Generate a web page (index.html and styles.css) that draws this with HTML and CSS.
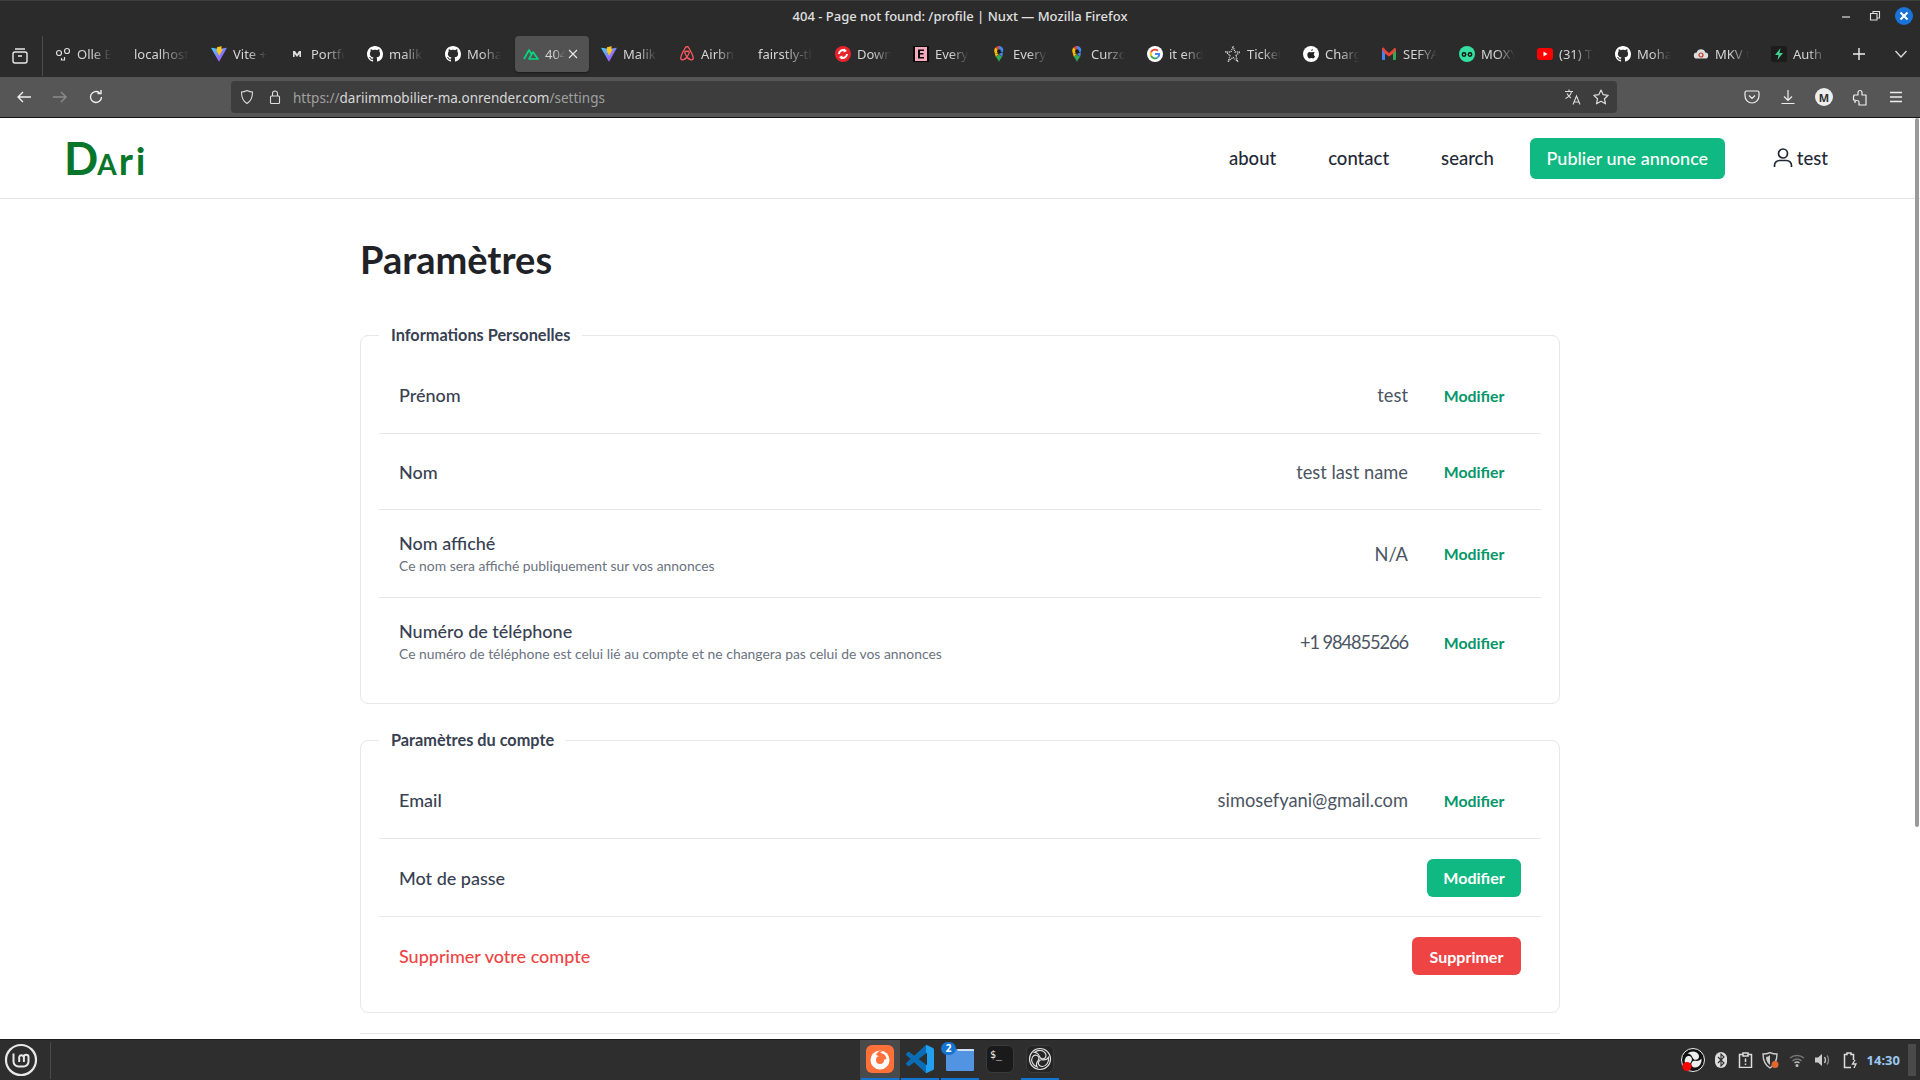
FILE: index.html
```html
<!DOCTYPE html>
<html lang="fr">
<head>
<meta charset="utf-8">
<title>Paramètres</title>
<link rel="stylesheet" href="styles.css">
</head>
<body>
<svg class="defs" width="0" height="0" aria-hidden="true">
  <defs>
    <symbol id="gh" viewBox="0 0 16 16"><path fill="#fff" d="M8 0C3.58 0 0 3.58 0 8c0 3.54 2.29 6.53 5.47 7.59.4.07.55-.17.55-.38 0-.19-.01-.82-.01-1.49-2.01.37-2.53-.49-2.69-.94-.09-.23-.48-.94-.82-1.13-.28-.15-.68-.52-.01-.53.63-.01 1.08.58 1.23.82.72 1.21 1.87.87 2.33.66.07-.52.28-.87.51-1.07-1.78-.2-3.64-.89-3.64-3.95 0-.87.31-1.59.82-2.15-.08-.2-.36-1.02.08-2.12 0 0 .67-.21 2.2.82.64-.18 1.32-.27 2-.27s1.36.09 2 .27c1.53-1.04 2.2-.82 2.2-.82.44 1.1.16 1.92.08 2.12.51.56.82 1.27.82 2.15 0 3.07-1.87 3.75-3.65 3.95.29.25.54.73.54 1.48 0 1.07-.01 1.93-.01 2.2 0 .21.15.46.55.38A8.01 8.01 0 0 0 16 8c0-4.42-3.58-8-8-8z"/></symbol>
    <linearGradient id="vg1" x1="0" y1="0" x2="1" y2="1"><stop offset="0" stop-color="#41d1ff"/><stop offset="1" stop-color="#bd34fe"/></linearGradient>
    <linearGradient id="vsc" x1="0" y1="0" x2="1" y2="0"><stop offset=".72" stop-color="#0a6db5"/><stop offset=".72" stop-color="#22a0f0"/></linearGradient>
    <symbol id="vite" viewBox="0 0 16 16"><path fill="url(#vg1)" d="M15.7 2.3 8.4 15.3c-.2.3-.6.3-.8 0L.3 2.3c-.2-.3.1-.7.4-.6L8 3l7.3-1.3c.3-.1.6.3.4.6z"/><path fill="#ffc517" d="M11.4.1 6 1.2l-.3 5 1.6.4-.4 2 1.4-.4-.3 2 .9-1.6 3-5.8-1.7.4.5-3z"/></symbol>
    <symbol id="pin" viewBox="0 0 16 16"><path fill="#34a853" d="M8 16c-1-2.5-2-3.5-3.2-5.2l3.2-2 3.2 2C10 12.500 9 13.500 8 16z"/><path fill="#4285f4" d="M11 1.300C10.200.5 9.100 0 8 0v5l3.600 1.200C12.600 4.500 12.500 2.500 11 1.300z"/><path fill="#ea4335" d="M8 0C6.600 0 5.400.6 4.500 1.600L8 5z"/><path fill="#fbbc04" d="M4.500 1.600C3.200 3 3 4.800 3.500 6.500L6 8l2-3z"/><path fill="#fbbc04" d="M3.500 6.500c.3 1.500.9 2.700 1.300 4.300L8 8 6 8z"/><path fill="#4285f4" d="M11.600 6.200 8 8l3.200 2.800c.4-1.500.9-3 .4-4.600z"/><circle cx="8" cy="5.200" r="1.900" fill="#1a1a1a"/></symbol>
    <symbol id="blade" viewBox="0 0 24 24"><path d="M6.500 5.500C10 2.500 15.500 2.800 17.500 6.500c1.300 2.500 0 5-2.500 5.300-1.800.2-3-1-3.500-2.300C10.500 7 8.500 5.500 6.500 5.500z"/></symbol>
  </defs>
</svg>

<div class="window">
  <header class="titlebar">
    <span></span>
    <span class="window-title">404 - Page not found: /profile | Nuxt — Mozilla Firefox</span>
    <div class="window-controls">
      <svg width="14" height="14" viewBox="0 0 14 14"><path d="M2 8h8" stroke="#ddd" stroke-width="1.200"/></svg>
      <svg width="14" height="14" viewBox="0 0 14 14"><path d="M2.500 4.500h6.500v6.500H2.500zM5 4.500V2.500h6.500V9H9" fill="none" stroke="#ddd" stroke-width="1.100"/></svg>
      <span class="close-dot"><svg width="10" height="10" viewBox="0 0 10 10"><path d="M1.500 1.500l7 7M8.500 1.500l-7 7" stroke="#fff" stroke-width="2"/></svg></span>
    </div>
  </header>

  <div class="tabstrip">
    <div class="tablist-btn">
      <svg width="18" height="18" viewBox="0 0 18 18" fill="none" stroke="#e8e8e8" stroke-width="1.400"><rect x="2" y="5" width="14" height="11" rx="2"/><path d="M4 2h10M7 9h4"/></svg>
    </div>
    <div class="tabs">
      <div class="tab"><svg class="ico" viewBox="0 0 16 16" fill="none" stroke="#ddd" stroke-width="1.200"><circle cx="4" cy="7" r="2.500"/><circle cx="12" cy="5" r="2.500"/><path d="M6.500 12v2h3v-3"/></svg><span class="tab-text">Olle Bergman</span></div>
      <div class="tab no-icon"><span class="tab-text">localhost:3000</span></div>
      <div class="tab"><svg class="ico"><use href="#vite"/></svg><span class="tab-text">Vite + Vue</span></div>
      <div class="tab"><svg class="ico" viewBox="0 0 16 16"><path fill="#ddd" d="M4 5h2l2 3 2-3h2v6h-1.600V8L8 11 5.600 8v3H4z"/></svg><span class="tab-text">Portfolio</span></div>
      <div class="tab"><svg class="ico"><use href="#gh"/></svg><span class="tab-text">malika</span></div>
      <div class="tab"><svg class="ico"><use href="#gh"/></svg><span class="tab-text">Mohamed</span></div>
      <div class="tab active"><svg class="ico" viewBox="0 0 16 16" fill="none" stroke="#00dc82" stroke-width="1.600" stroke-linejoin="round"><path d="M1 13 6 4l2.500 4.500M6 13l4-7 5 7z"/></svg><span class="tab-text">404 - Page</span><svg class="tab-close" width="10" height="10" viewBox="0 0 10 10"><path d="M1 1l8 8M9 1 1 9" stroke="#e8e8e8" stroke-width="1.100"/></svg></div>
      <div class="tab"><svg class="ico"><use href="#vite"/></svg><span class="tab-text">Malika</span></div>
      <div class="tab"><svg class="ico" viewBox="0 0 16 16" fill="none" stroke="#ff5a5f" stroke-width="1.300"><path d="M8 11C6 8 5.500 7 5.800 6c.4-1 3.900-1 4.400 0 .3 1-.2 2-2.200 5 2 2.800 5.500 4 6.200 1.500.5-1.800-3.500-9-4.700-11-.9-1.200-2.100-1.200-3 0C5.300 3.500 1.300 10.700 1.800 12.500 2.500 15 6 13.800 8 11z"/></svg><span class="tab-text">Airbnb</span></div>
      <div class="tab no-icon"><span class="tab-text">fairstly-the</span></div>
      <div class="tab"><svg class="ico" viewBox="0 0 16 16"><circle cx="8" cy="8" r="8" fill="#e8232c"/><path d="M4 8a4 4 0 0 1 6-3.400M12 8a4 4 0 0 1-6 3.400" stroke="#fff" stroke-width="2" fill="none"/><path d="M9 2.500 12 5 8.500 6.500zM7 13.500 4 11l3.500-1.500z" fill="#fff"/></svg><span class="tab-text">Download</span></div>
      <div class="tab"><svg class="ico" viewBox="0 0 16 16"><rect width="16" height="16" fill="#0a0a0a"/><path fill="#f5a9bc" d="M2 1h12v14H2z"/><path fill="#0a0a0a" d="M5 3.500h6V5H7v2h3.500v1.500H7V11h4v1.500H5z"/></svg><span class="tab-text">Everyone</span></div>
      <div class="tab"><svg class="ico"><use href="#pin"/></svg><span class="tab-text">Everyone</span></div>
      <div class="tab"><svg class="ico"><use href="#pin"/></svg><span class="tab-text">Curzon</span></div>
      <div class="tab"><svg class="ico" viewBox="0 0 16 16"><circle cx="8" cy="8" r="8" fill="#fff"/><path d="M8 4.500a3.500 3.500 0 0 1 2.300.9l1.300-1.300A5.300 5.300 0 0 0 3.300 5.600l1.500 1.200A3.500 3.500 0 0 1 8 4.500z" fill="#ea4335"/><path d="M3.300 5.600a5.300 5.300 0 0 0 0 4.800l1.500-1.200a3.500 3.500 0 0 1 0-2.400z" fill="#fbbc04"/><path d="M3.300 10.400a5.300 5.300 0 0 0 8 1.700l-1.400-1.100a3.500 3.500 0 0 1-5.100-1.800z" fill="#34a853"/><path d="M13.200 7H8v2h3.100a2.700 2.700 0 0 1-1.200 2l1.400 1.100A5.300 5.300 0 0 0 13.200 7z" fill="#4285f4"/></svg><span class="tab-text">it ends</span></div>
      <div class="tab"><svg class="ico" viewBox="0 0 16 16"><path fill="none" stroke="#ddd" stroke-width="1.300" stroke-dasharray="1 .9" d="M8 .5 10 6h5l-4 3.500L12.500 15 8 11.500 3.500 15 5 9.500 1 6h5z"/></svg><span class="tab-text">Ticket</span></div>
      <div class="tab"><svg class="ico" viewBox="0 0 16 16"><circle cx="8" cy="8" r="8" fill="#fff"/><path d="M10.300 5.900c-.7-.1-1.300.4-1.900.4-.5 0-1.100-.4-1.700-.4-1.400 0-2.400 1.200-2.400 2.800 0 1.900 1.200 3.800 2.300 3.800.6 0 .9-.4 1.700-.4s1 .4 1.700.4c1 0 1.700-1.300 2-2.300-1.600-.7-1.700-2.900-.1-3.700-.4-.4-1-.6-1.600-.6zM9.900 3c-.9.100-1.700.9-1.600 2 .9 0 1.700-1 1.600-2z" fill="#222"/></svg><span class="tab-text">Charger</span></div>
      <div class="tab"><svg class="ico" viewBox="0 0 16 16"><path fill="#4285f4" d="M1 3.500h3V14H2a1 1 0 0 1-1-1z"/><path fill="#34a853" d="M12 3.500h3V13a1 1 0 0 1-1 1h-2z"/><path fill="#ea4335" d="M4 3.500 8 7l4-3.500 1-1.200c.8-.6 2-.1 2 1.200v.5L12 7.800 8 10.500 4 7.800 1 3.500V3c0-1.300 1.300-1.800 2-1.200z"/></svg><span class="tab-text">SEFYANI</span></div>
      <div class="tab"><svg class="ico" viewBox="0 0 16 16"><circle cx="8" cy="8" r="8" fill="#34e0a1"/><circle cx="5" cy="8.500" r="2.400" fill="#111"/><circle cx="11" cy="8.500" r="2.400" fill="#111"/><circle cx="5" cy="8.500" r="1" fill="#34e0a1"/><circle cx="11" cy="8.500" r="1" fill="#34e0a1"/></svg><span class="tab-text">MOXY</span></div>
      <div class="tab"><svg class="ico" viewBox="0 0 16 16"><rect y="2" width="16" height="12" rx="3" fill="#f00"/><path d="M6.500 5.500v5l4-2.500z" fill="#fff"/></svg><span class="tab-text">(31) Top</span></div>
      <div class="tab"><svg class="ico"><use href="#gh"/></svg><span class="tab-text">Mohamed</span></div>
      <div class="tab"><svg class="ico" viewBox="0 0 16 16"><path d="M4 12.500a3 3 0 0 1-.3-6 4.500 4.500 0 0 1 8.600 0 3 3 0 0 1-.3 6z" fill="#ddd"/><circle cx="8" cy="9" r="2" fill="none" stroke="#c0392b" stroke-width="1.200"/></svg><span class="tab-text">MKV to</span></div>
      <div class="tab"><svg class="ico" viewBox="0 0 16 16"><rect width="16" height="16" rx="2" fill="#1c1c1c"/><path d="M9.500 2 4 9h3.500l-1 5L12 7H8.500z" fill="#3ecf8e"/></svg><span class="tab-text">Auth | Supabase</span></div>
    </div>
    <div class="strip-actions">
      <svg width="14" height="14" viewBox="0 0 14 14"><path d="M7 1v12M1 7h12" stroke="#eee" stroke-width="1.400"/></svg>
      <svg width="14" height="14" viewBox="0 0 14 14" fill="none"><path d="M1.500 4 7 10l5.500-6" stroke="#ddd" stroke-width="1.300"/></svg>
    </div>
  </div>

  <nav class="urlbar">
    <div class="tool-group">
      <span class="tool"><svg width="16" height="16" viewBox="0 0 16 16" fill="none" stroke="#eee" stroke-width="1.400"><path d="M15 8H2M7 3 2 8l5 5"/></svg></span>
      <span class="tool"><svg width="16" height="16" viewBox="0 0 16 16" fill="none" stroke="#8c8c8c" stroke-width="1.400"><path d="M1 8h13M9 3l5 5-5 5"/></svg></span>
      <span class="tool"><svg width="16" height="16" viewBox="0 0 16 16" fill="none" stroke="#eee" stroke-width="1.400"><path d="M13.500 8a5.500 5.500 0 1 1-2-4.300M13 1v3.500H9.500"/></svg></span>
    </div>
    <div class="address">
      <svg class="addr-icon" width="16" height="16" viewBox="0 0 16 16" fill="none" stroke="#ddd" stroke-width="1.100"><path d="M8 1.500c2 1 3.500 1.500 5.500 1.500 0 5-1 9-5.500 11.500C3.500 12 2.500 8 2.500 3 4.500 3 6 2.500 8 1.500z"/></svg>
      <svg class="addr-icon" width="16" height="16" viewBox="0 0 16 16" fill="none" stroke="#ddd" stroke-width="1.100"><rect x="3.500" y="7" width="9" height="7.500" rx="1"/><path d="M5.500 7V4.500a2.500 2.500 0 0 1 5 0V7"/></svg>
      <span class="url"><span class="url-dim">https://</span>dariimmobilier-ma.onrender.com<span class="url-dim">/settings</span></span>
      <svg class="addr-end" width="18" height="18" viewBox="0 0 18 18" fill="none" stroke="#ddd" stroke-width="1.100"><path d="M1 3.500h8M5 1.500v2M7.500 3.500C7 6.500 4.500 9 1.500 10.500M3 5.500c1 2 2.500 3.500 4 4.500"/><path d="M9 16.500 12.500 8l3.500 8.500M10.200 14h4.600"/></svg>
      <svg class="addr-end" width="18" height="18" viewBox="0 0 18 18" fill="none" stroke="#ddd" stroke-width="1.200"><path d="M9 2l2.200 4.700 5 .6-3.700 3.500 1 5L9 13.300 4.500 15.800l1-5L1.800 7.300l5-.6z" stroke-linejoin="round"/></svg>
    </div>
    <div class="tool-group">
      <span class="tool"><svg width="16" height="16" viewBox="0 0 16 16" fill="none" stroke="#eee" stroke-width="1.200"><path d="M2.500 2h11A1.500 1.500 0 0 1 15 3.500V7A7 7 0 0 1 1 7V3.500A1.500 1.500 0 0 1 2.500 2zM5 6.500l3 3 3-3"/></svg></span>
      <span class="tool"><svg width="16" height="16" viewBox="0 0 16 16" fill="none" stroke="#eee" stroke-width="1.200"><path d="M8 1v10M4 7.500 8 11.500l4-4M1.500 14.500h13"/></svg></span>
      <span class="tool"><span class="avatar">M</span></span>
      <span class="tool"><svg width="16" height="18" viewBox="0 0 16 18" fill="none" stroke="#eee" stroke-width="1.200"><path d="M2 7h4V4.500a2 2 0 0 1 4 0V7h4v10H7v-2.500a2 2 0 0 0-4 0V12H1.500V9z" stroke-linejoin="round"/></svg></span>
      <span class="tool"><svg width="16" height="16" viewBox="0 0 16 16" stroke="#eee" stroke-width="1.300"><path d="M2 3.500h12M2 8h12M2 12.500h12"/></svg></span>
    </div>
  </nav>

  <div class="page">
    <header class="site-header">
      <a class="logo"><span class="logo-d">D</span><span class="logo-a">A</span><span class="logo-r">ri</span></a>
      <div class="site-nav">
        <a class="nav-link">about</a>
        <a class="nav-link">contact</a>
        <a class="nav-link">search</a>
        <a class="publish">Publier une annonce</a>
        <a class="user"><svg width="20" height="22" viewBox="0 0 20 22" fill="none" stroke="#1f2937" stroke-width="1.700"><circle cx="10" cy="6.500" r="4.500"/><path d="M1.500 20v-1.500a5 5 0 0 1 5-5h7a5 5 0 0 1 5 5V20"/></svg>test</a>
      </div>
    </header>

    <main class="content">
      <h1 class="page-title">Paramètres</h1>

      <fieldset class="panel">
        <legend class="panel-legend">Informations Personelles</legend>
        <div class="row">
          <div class="label">Prénom</div>
          <div class="value">test</div>
          <a class="edit-link">Modifier</a>
        </div>
        <div class="row">
          <div class="label">Nom</div>
          <div class="value">test last name</div>
          <a class="edit-link">Modifier</a>
        </div>
        <div class="row row-tall">
          <div class="label">Nom affiché<small class="hint">Ce nom sera affiché publiquement sur vos annonces</small></div>
          <div class="value">N/A</div>
          <a class="edit-link">Modifier</a>
        </div>
        <div class="row row-tall">
          <div class="label">Numéro de téléphone<small class="hint">Ce numéro de téléphone est celui lié au compte et ne changera pas celui de vos annonces</small></div>
          <div class="value value-phone">+1 984855266</div>
          <a class="edit-link">Modifier</a>
        </div>
      </fieldset>

      <fieldset class="panel panel-account">
        <legend class="panel-legend">Paramètres du compte</legend>
        <div class="row">
          <div class="label">Email</div>
          <div class="value">simosefyani@gmail.com</div>
          <a class="edit-link">Modifier</a>
        </div>
        <div class="row row-action">
          <div class="label">Mot de passe</div>
          <a class="btn btn-green">Modifier</a>
        </div>
        <div class="row row-action">
          <div class="label label-danger">Supprimer votre compte</div>
          <a class="btn btn-red">Supprimer</a>
        </div>
      </fieldset>

      <div class="next-panel"></div>
    </main>
    <div class="scroll-thumb"></div>
  </div>

  <footer class="taskbar">
    <div class="task-left">
      <svg width="34" height="34" viewBox="0 0 34 34" fill="none" stroke="#e8e8e8"><circle cx="17" cy="17" r="15" stroke-width="2.200"/><path d="M9.500 10.500v8a5 5 0 0 0 5 5h5a5 5 0 0 0 5-5v-4.500a2.300 2.300 0 0 0-4.600 0v5M15.200 19v-5a2.300 2.300 0 0 1 4.400 0" stroke-width="2"/></svg>
    </div>
    <div class="task-center">
      <div class="task-app is-active is-open"><span class="fx-tile"><svg width="22" height="22" viewBox="0 0 22 22"><circle cx="11" cy="12" r="9.500" fill="#fff"/><circle cx="11" cy="12" r="4" fill="#ff7139"/><path d="M11 8.500a3.500 3.500 0 0 1 3.500 3.500l3-1C17 7 14 5 11 5 12.500 3.500 14 2.500 15 2.500 11 1.500 8 4 7 7z" fill="#ff7139"/></svg></span></div>
      <div class="task-app is-open"><svg width="28" height="28" viewBox="0 0 24 24"><path fill="url(#vsc)" d="M23.150 2.587 18.210.210a1.494 1.494 0 0 0-1.705.29l-9.460 8.630-4.120-3.128a.999.999 0 0 0-1.276.057L.327 7.261A1 1 0 0 0 .326 8.740L3.899 12 .326 15.260a1 1 0 0 0 .001 1.479L1.650 17.940a.999.999 0 0 0 1.276.057l4.120-3.128 9.460 8.630a1.492 1.492 0 0 0 1.704.29l4.942-2.377A1.500 1.500 0 0 0 24 20.060V3.939a1.500 1.500 0 0 0-.85-1.352zm-5.146 14.861L10.826 12l7.178-5.448v10.896z"/></svg></div>
      <div class="task-app is-open"><svg width="28" height="23" viewBox="0 0 28 23"><path fill="#5294e2" d="M0 2a1 1 0 0 1 1-1h26a1 1 0 0 1 1 1v20a1 1 0 0 1-1 1H1a1 1 0 0 1-1-1z"/><path fill="#e8eef5" d="M11 1h16a1 1 0 0 1 1 1v1H12z" opacity=".85"/></svg><span class="app-badge">2</span></div>
      <div class="task-app"><span class="term-tile">$_</span></div>
      <div class="task-app is-open"><span class="obs-tile"><svg width="24" height="24" viewBox="0 0 24 24" fill="none" stroke="#ddd" stroke-width="1.200"><circle cx="12" cy="12" r="10.500"/><use href="#blade" width="24" height="24"/><use href="#blade" width="24" height="24" transform="rotate(120 12 12)"/><use href="#blade" width="24" height="24" transform="rotate(240 12 12)"/></svg></span></div>
    </div>
    <div class="task-right">
      <span class="tray obs-tray"><svg width="24" height="24" viewBox="0 0 24 24" fill="#eee"><circle cx="12" cy="12" r="11.500" fill="#111" stroke="#eee" stroke-width="1"/><use href="#blade" width="24" height="24"/><use href="#blade" width="24" height="24" transform="rotate(120 12 12)"/><use href="#blade" width="24" height="24" transform="rotate(240 12 12)"/><circle cx="6" cy="18.500" r="4.500" fill="#f00"/></svg></span>
      <span class="tray tray-bt"><svg width="12" height="16" viewBox="0 0 12 16"><rect width="12" height="16" rx="6" fill="#ddd"/><path d="M3 5l6 6-3 3V2l3 3-6 6" fill="none" stroke="#2e2e2e" stroke-width="1.100"/></svg></span>
      <span class="tray tray-clip"><svg width="15" height="16" viewBox="0 0 15 16" fill="none" stroke="#ddd" stroke-width="1.500"><path d="M5 2.500H1.500v13h12v-13H10M5 1h5v3H5z"/><path d="M7.500 6.500V10M7.500 11.500v1.500"/></svg></span>
      <span class="tray tray-shield"><svg width="18" height="17" viewBox="0 0 18 17"><path d="M8 .5c2 1 4 1.500 7 1.500 0 6-2 11-7 14C3 13 1 8 1 2c3 0 5-.5 7-1.500z" fill="none" stroke="#ccc" stroke-width="1.400"/><path d="M8 3v10c-2-1.500-4-4-4-8 1.500 0 3-1 4-2z" fill="#ccc"/><circle cx="13" cy="12.500" r="3.500" fill="#e2672e"/></svg></span>
      <span class="tray tray-wifi"><svg width="16" height="13" viewBox="0 0 16 13" fill="none" stroke="#bbb" stroke-width="1.500"><path d="M1 4c4-3.500 10-3.500 14 0M3.500 6.800c3-2.500 6-2.500 9 0" stroke="#777"/><path d="M5.500 9c1.500-1.200 3.500-1.200 5 0"/><circle cx="8" cy="11.500" r=".8" fill="#bbb"/></svg></span>
      <span class="tray tray-vol"><svg width="16" height="14" viewBox="0 0 16 14" fill="none"><path d="M0 4.500h3L7 1v12L3 9.500H0z" fill="#ccc"/><path d="M9.500 4c1.200 1.800 1.200 4.200 0 6" stroke="#ccc" stroke-width="1.300"/><path d="M12 2.500c2 2.500 2 6.500 0 9" stroke="#888" stroke-width="1.300"/></svg></span>
      <span class="tray tray-bat"><svg width="15" height="17" viewBox="0 0 15 17" fill="none" stroke="#ddd" stroke-width="1.500"><path d="M8 15.500H1.500v-13H4V1h4v1.500h2.500V8"/><path d="M12 8l-2.500 4h3.500L11 16" stroke-width="1.300"/></svg></span>
      <span class="clock">14:30</span>
      <span class="show-desktop"></span>
    </div>
  </footer>
</div>
</body>
</html>
```

FILE: styles.css
```css
* { box-sizing: border-box; }
html, body { margin: 0; height: 100%; overflow: hidden; background: #fff; }
body { font-family: "Lato", "Noto Sans", sans-serif; }
a { cursor: pointer; }
.defs { position: absolute; }

.window { display: flex; flex-direction: column; width: 1920px; height: 1080px; overflow: hidden; }

/* browser chrome */
.titlebar {
  height: 36px; flex: none; display: grid; grid-template-columns: 1fr auto 1fr; align-items: center;
  background: #2b2b2b; border-top: 1px solid #3d3d3d; color: #e0e0e0;
  font: 500 13px "Noto Sans", sans-serif;
}
.window-title { position: relative; top: -3px; }
.window-controls { display: flex; align-items: center; justify-content: flex-end; gap: 14px; padding-right: 7px; position: relative; top: -3px; }
.close-dot { width: 18px; height: 18px; border-radius: 50%; background: #1a73d8; display: flex; align-items: center; justify-content: center; margin-left: -1px; }

.tabstrip { height: 41px; flex: none; display: flex; align-items: center; background: #2b2b2b; padding-bottom: 5px; }
.tablist-btn { width: 43px; height: 40px; flex: none; display: flex; align-items: center; justify-content: center; border-right: 1px solid #4d4d4d; margin-top: 4px; padding-right: 3px; }
.tabs { display: flex; gap: 4px; padding-left: 4px; width: 1797px; flex: none; align-items: center; }
.tab { width: 74px; height: 36px; flex: none; display: flex; align-items: center; gap: 6px; padding: 0 10px 0 8px; border-radius: 4px; color: #d4d4d4; font: 400 13px "Noto Sans", sans-serif; position: relative; }
.tab.no-icon { padding-left: 9px; }
.tab.active { background: #525252; box-shadow: 0 1px 2px rgba(0,0,0,.4); }
.ico { width: 16px; height: 16px; flex: none; }
.tab-text { flex: 1; min-width: 0; white-space: nowrap; overflow: hidden; -webkit-mask-image: linear-gradient(90deg, #000 45%, transparent 100%); mask-image: linear-gradient(90deg, #000 45%, transparent 100%); }
.tab.active .tab-text { flex: none; width: 20px; }
.tab-close { position: absolute; right: 11px; top: 13px; }
.strip-actions { display: flex; flex: 1; align-items: center; justify-content: space-between; padding: 0 12px 0 12px; }

.urlbar { height: 41px; flex: none; display: flex; align-items: center; background: #565656; border-bottom: 1px solid #141414; padding: 0 6px; }
.tool-group { display: flex; flex: none; }
.tool { width: 36px; height: 32px; display: flex; align-items: center; justify-content: center; }
.address { flex: 1; height: 32px; margin: 0 117px 0 117px; background: #3d3d3d; border-radius: 4px; display: flex; align-items: center; padding: 0 7px 0 8px; color: #e6e6e6; font: 400 13.500px "Noto Sans", sans-serif; }
.addr-icon { margin-right: 12px; flex: none; }
.url { flex: 1; color: #d8d8d8; margin-left: -2px; padding-top: 1px; }
.url-dim { color: #a0a0a0; }
.addr-end { margin-left: 10px; flex: none; }
.avatar { width: 18px; height: 18px; border-radius: 50%; background: #eee; color: #333; font: 700 11px "Noto Sans", sans-serif; display: flex; align-items: center; justify-content: center; }

/* site */
.page { flex: 1; min-height: 0; position: relative; background: #fff; overflow: hidden; }
.site-header { height: 81px; display: flex; align-items: center; justify-content: space-between; border-bottom: 1px solid #e5e7eb; padding: 0 92px 0 64px; }
.logo { color: #07752a; font-family: "Lato", sans-serif; font-weight: 700; display: flex; align-items: baseline; line-height: 1; }
.logo-d { font-size: 45px; }
.logo-a { font-size: 28px; margin-left: -1px; }
.logo-r { font-size: 38px; letter-spacing: 3px; margin-left: 2px; }
.site-nav { display: flex; align-items: center; }
.nav-link { font-size: 18.500px; font-weight: 500; color: #1f2937; margin-right: 52px; }
.nav-link:nth-child(3) { margin-right: 36px; }
.publish { width: 195px; height: 41px; background: #10b981; color: #fff; border-radius: 6px; display: flex; align-items: center; justify-content: center; font-size: 18px; font-weight: 500; }
.user { display: flex; align-items: center; gap: 4px; margin-left: 48px; font-size: 18.500px; font-weight: 500; color: #1f2937; }

.content { width: 1200px; margin: 0 auto; }
.page-title { margin: 35px 0 0; font-size: 38px; line-height: 50px; font-weight: 700; color: #1f2328; height: 52px; }

.panel { margin: 39px 0 0; padding: 12px 18px 17px; border: 1px solid #e5e7eb; border-radius: 8px; min-width: 0; }
.panel-account { margin-top: 26px; }
.panel-legend { padding: 0 12px; font-size: 16.300px; line-height: 20px; font-weight: 700; color: #374151; }
.row { display: flex; align-items: center; height: 76px; padding: 0 20px; border-bottom: 1px solid #e5e7eb; }
.row:first-of-type { height: 77px; }
.row:last-child { border-bottom: 0; }
.row-tall { height: 88px; }
.row-action { height: 78px; }
.label { flex: 1; font-size: 18px; font-weight: 500; color: #374151; line-height: 22px; }
.label-danger { color: #ef4444; }
.hint { display: block; font-size: 13.900px; font-weight: 400; color: #6b7280; line-height: 20px; margin-top: 2px; }
.value { font-size: 18.300px; color: #4b5563; margin-right: 19px; }
.value-phone { letter-spacing: -1.100px; }
.edit-link { width: 94px; text-align: center; font-size: 15.800px; font-weight: 700; color: #059669; }
.btn { height: 38px; display: flex; align-items: center; justify-content: center; border-radius: 6px; color: #fff; font-size: 16px; font-weight: 700; }
.btn-green { width: 94px; background: #10b981; }
.btn-red { width: 109px; background: #ef4444; }
.next-panel { margin-top: 20px; border-top: 1px solid #e5e7eb; height: 10px; }
.scroll-thumb { position: absolute; top: 0; right: 1px; width: 4px; height: 709px; background: #9a9a9a; border-radius: 2px; }

/* taskbar */
.taskbar { height: 41px; flex: none; display: grid; grid-template-columns: 1fr auto 1fr; background: #2e2e2e; border-top: 1px solid #1c1c1c; color: #fff; }
.task-left { display: flex; align-items: center; padding-left: 4px; }
.task-left::after { content: ""; width: 1px; height: 37px; background: #4a4a4a; margin-left: 12px; }
.task-center { display: flex; }
.task-app { width: 40px; height: 40px; display: flex; align-items: center; justify-content: center; position: relative; border-bottom: 2px solid transparent; }
.task-app.is-open::after { content: ""; position: absolute; left: 1px; right: 1px; bottom: -2px; height: 2px; background: #1474d4; }
.task-app.is-active { background: #4a4a4a; }
.fx-tile { width: 28px; height: 28px; border-radius: 6px; background: #ff7139; display: flex; align-items: center; justify-content: center; }
.app-badge { position: absolute; left: 1px; top: 2px; width: 15px; height: 13px; border-radius: 7px; background: #1474d4; color: #fff; font: 700 10px/13px "Noto Sans", sans-serif; text-align: center; }
.term-tile { width: 28px; height: 28px; border-radius: 6px; background: #1a1a1a; border: 1px solid #3a3a3a; color: #eee; font: 400 10px/14px "DejaVu Sans Mono", monospace; padding: 2px 0 0 3px; }
.obs-tile { width: 28px; height: 28px; border-radius: 6px; background: #252525; border: 1px solid #3a3a3a; display: flex; align-items: center; justify-content: center; }
.task-right { display: flex; align-items: center; justify-content: flex-end; padding-right: 4px; }
.tray { display: flex; align-items: center; justify-content: center; flex: none; }
.obs-tray { margin-right: 10px; }
.tray-bt { margin-right: 11px; }
.tray-clip { margin-right: 9px; }
.tray-shield { margin-right: 9px; }
.tray-wifi { margin-right: 10px; }
.tray-vol { margin-right: 12px; }
.tray-bat { margin-right: 9px; }
.clock { font: 700 13px "Noto Sans", sans-serif; color: #9cc7f2; margin-right: 8px; }
.show-desktop { width: 8px; height: 32px; background: #4a4a4a; }
```
